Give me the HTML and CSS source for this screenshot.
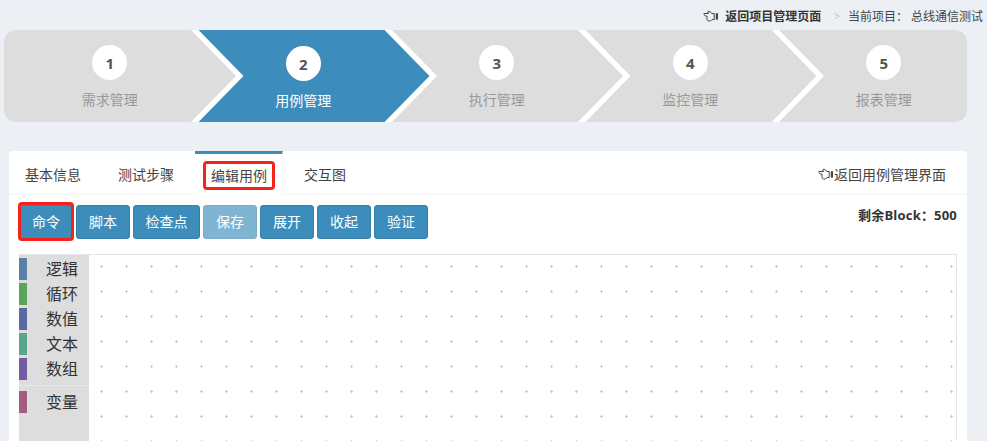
FILE: index.html
```html
<!DOCTYPE html>
<html lang="zh">
<head>
<meta charset="utf-8">
<title>用例管理</title>
<link rel="stylesheet" href="styles.css">
</head>
<body>
<header class="topbar">
  <a class="back-project">
    <svg class="hand" viewBox="0 0 16 12"><path d="M1 3.5h4.6L4.6 2 6 1l3 2.5h2.2v6H9L7.5 11h-2C4.5 11 4 10 4 9V6H2.6C1.6 6 1 4.8 1 3.5z"/><rect class="cuff" x="12.8" y="3.2" width="2.2" height="6.4"/></svg>
    返回项目管理页面
  </a>
  <span class="sep">&gt;</span>
  <span class="current">当前项目： 总线通信测试</span>
</header>

<nav class="steps">
  <div class="step step-first"><span class="num">1</span><span class="label">需求管理</span></div>
  <div class="step step-active"><span class="num">2</span><span class="label">用例管理</span></div>
  <div class="step"><span class="num">3</span><span class="label">执行管理</span></div>
  <div class="step"><span class="num">4</span><span class="label">监控管理</span></div>
  <div class="step"><span class="num">5</span><span class="label">报表管理</span></div>
</nav>

<main class="card">
  <div class="tabs">
    <a class="tab">基本信息</a>
    <a class="tab">测试步骤</a>
    <a class="tab tab-active"><span class="marked">编辑用例</span></a>
    <a class="tab">交互图</a>
    <a class="tab-back">
      <svg class="hand" viewBox="0 0 16 12"><path d="M1 3.5h4.6L4.6 2 6 1l3 2.5h2.2v6H9L7.5 11h-2C4.5 11 4 10 4 9V6H2.6C1.6 6 1 4.8 1 3.5z"/><rect class="cuff" x="12.8" y="3.2" width="2.2" height="6.4"/></svg>返回用例管理界面
    </a>
  </div>
  <div class="toolbar">
    <button class="btn btn-marked">命令</button>
    <button class="btn">脚本</button>
    <button class="btn btn-wide">检查点</button>
    <button class="btn btn-disabled">保存</button>
    <button class="btn">展开</button>
    <button class="btn">收起</button>
    <button class="btn">验证</button>
    <span class="remain">剩余Block：500</span>
  </div>
  <div class="workspace">
    <aside class="toolbox">
      <div class="cat"><i class="swatch c-logic"></i>逻辑</div>
      <div class="cat"><i class="swatch c-loop"></i>循环</div>
      <div class="cat"><i class="swatch c-math"></i>数值</div>
      <div class="cat"><i class="swatch c-text"></i>文本</div>
      <div class="cat"><i class="swatch c-list"></i>数组</div>
      <div class="divider"></div>
      <div class="cat"><i class="swatch c-var"></i>变量</div>
    </aside>
    <div class="canvas">
      <svg class="grid" width="100%" height="100%">
        <defs>
          <pattern id="dots" width="25" height="25" patternUnits="userSpaceOnUse" x="0" y="0">
            <rect x="12" y="10" width="1" height="3" fill="#ccc"/>
            <rect x="11" y="11" width="3" height="1" fill="#ccc"/>
          </pattern>
        </defs>
        <rect width="100%" height="100%" fill="url(#dots)"/>
      </svg>
    </div>
  </div>
</main>
</body>
</html>
```
FILE: styles.css
```css
* { box-sizing: border-box; }
html, body { margin: 0; height: 100%; }
body {
  display: flex;
  flex-direction: column;
  overflow: hidden;
  background: #ecf0f5;
  color: #444;
  font-family: "Open Sans", "Noto Sans CJK SC", sans-serif;
  font-size: 14px;
}
.topbar {
  flex: none;
  display: flex;
  justify-content: flex-end;
  align-items: center;
  height: 30px;
  padding: 2px 4px 0 0;
  font-size: 12px;
  color: #444;
}
.back-project { display: flex; align-items: center; font-weight: 700; color: #333; }
.hand { width: 16px; height: 12px; flex: none; }
.hand path { fill: none; stroke: #444; stroke-width: 1; }
.hand .cuff { fill: #444; }
.back-project .hand { margin-right: 6px; }
.sep { margin: 0 8px 0 13px; color: #bbb; font-size: 10px; }

.steps {
  flex: none;
  display: flex;
  width: 963px;
  height: 92px;
  margin-left: 4px;
  border-radius: 12px;
  overflow: hidden;
  background: #fff;
}
.step {
  flex: none;
  display: flex;
  flex-direction: column;
  align-items: center;
  width: 238.5px;
  height: 92px;
  margin-right: -45px;
  padding: 15px 27px 0 0;
  background: #ddd;
  color: #999;
  clip-path: polygon(1px 0, 46px 46px, 1px 92px, 187px 92px, 232px 46px, 187px 0);
}
.step-first { clip-path: polygon(0 0, 0 92px, 187px 92px, 232px 46px, 187px 0); }
.step-active { background: #3c8dbc; color: #fff; padding-top: 16px; }
.num {
  display: flex;
  align-items: center;
  justify-content: center;
  width: 35px;
  height: 35px;
  border-radius: 50%;
  background: #fff;
  color: #555;
  font-size: 15px;
  font-weight: 700;
}
.label { margin-top: 10px; line-height: 20px; }

.card {
  flex: 1;
  min-height: 0;
  display: flex;
  flex-direction: column;
  margin: 29px 20px 0 9px;
  background: #fff;
  border-radius: 4px 4px 0 0;
}
.tabs {
  flex: none;
  display: flex;
  align-items: stretch;
  height: 44px;
  border-bottom: 1px solid #f4f4f4;
}
.tab {
  display: flex;
  align-items: center;
  width: 88px;
  margin-right: 5px;
  padding: 3px 0 0 16px;
}
.tab:nth-child(4) { width: auto; }
.tab-active {
  height: 44px;
  background: #fff;
  border-top: 3px solid #3c8dbc;
  border-right: 1px solid #f4f4f4;
  padding-top: 1px;
}
.marked { position: relative; }
.marked::after {
  content: "";
  position: absolute;
  inset: -4px -8px -5px;
  border: 3px solid #f5221b;
  border-radius: 4px;
}
.tab-back {
  display: flex;
  align-items: center;
  margin-left: auto;
  padding: 3px 21px 0 0;
}
.toolbar {
  flex: none;
  display: flex;
  gap: 3px;
  padding: 10px 10px 0;
  height: 59px;
}
.btn {
  height: 34px;
  padding: 0 12px;
  border: 1px solid #367fa9;
  border-radius: 3px;
  background: #3c8dbc;
  color: #fff;
  font: inherit;
  line-height: 20px;
}
.btn-wide { padding: 0 11.5px; }
.btn-disabled { opacity: .65; }
.btn-marked { position: relative; }
.btn-marked::after {
  content: "";
  position: absolute;
  inset: -4px -2px -3px;
  border: 3px solid #f5221b;
  border-radius: 4px;
}
.remain {
  margin-left: auto;
  font-size: 13px;
  font-weight: 700;
  letter-spacing: .2px;
  color: #333;
  line-height: 20px;
}
.workspace {
  flex: 1;
  min-height: 0;
  display: flex;
  margin: 0 10px;
  border: 1px solid #e5e5e5;
  border-width: 1px 1px 0 0;
}
.toolbox {
  flex: none;
  width: 70px;
  padding-top: 3px;
  background: #ddd;
  color: #333;
}
.cat {
  display: flex;
  align-items: center;
  height: 22px;
  margin-bottom: 3px;
  padding: 0 0 2px 8px;
  font-size: 16px;
}
.swatch { align-self: flex-start; width: 8px; height: 22px; margin: 0 19px 0 -8px; }
.c-logic { background: #5b80a5; }
.c-loop { background: #5ba55b; }
.c-math { background: #5b67a5; }
.c-text { background: #5ba58c; }
.c-list { background: #745ba5; }
.c-var { background: #a55b80; }
.divider { height: 1px; margin: 5px 0 5px; background: #e8e8e8; }
.canvas { flex: 1; min-width: 0; }
.grid { display: block; }
```
